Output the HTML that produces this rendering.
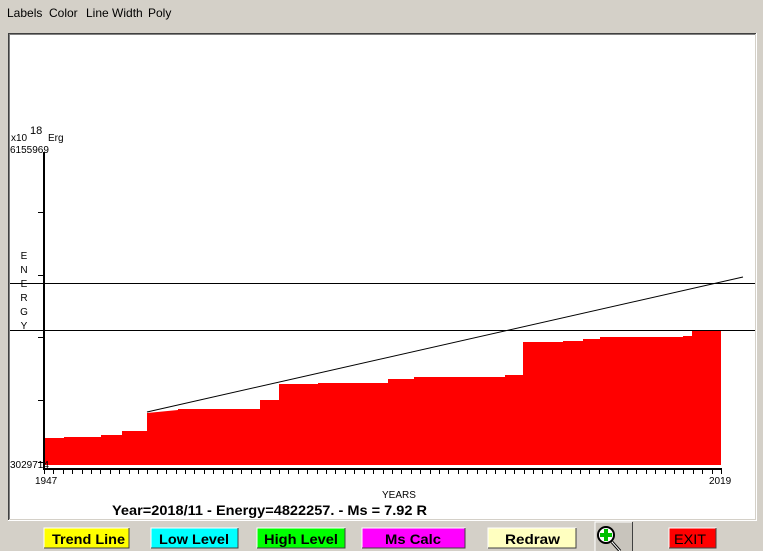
<!DOCTYPE html>
<html><head><meta charset="utf-8"><style>
html,body{margin:0;padding:0;width:763px;height:551px;overflow:hidden;background:#d4d0c8;font-family:"Liberation Sans",sans-serif;}
svg{position:absolute;left:0;top:0}
</style></head><body>
<svg width="763" height="551" viewBox="0 0 763 551" xmlns="http://www.w3.org/2000/svg" font-family="Liberation Sans, sans-serif">
<rect x="0" y="0" width="763" height="551" fill="#d4d0c8"/>
<text x="7" y="17" font-size="12" fill="#000">Labels</text>
<text x="49" y="17" font-size="12" fill="#000">Color</text>
<text x="86" y="17" font-size="12" fill="#000">Line Width</text>
<text x="148" y="17" font-size="12" fill="#000">Poly</text>
<rect x="8" y="33" width="749" height="488" fill="#fff"/>
<path d="M8.5 520V33.5H756" stroke="#404040" stroke-width="1" fill="none"/>
<path d="M9.5 520V34.5H755" stroke="#808080" stroke-width="1" fill="none"/>
<path d="M8 520.5H756.5V33" stroke="#fff" stroke-width="1" fill="none"/>
<path d="M9 519.5H755.5V34" stroke="#d4d0c8" stroke-width="1" fill="none"/>
<polygon fill="#ff0000" points="45,465 45,438 64,438 64,437 101,437 101,435 122,435 122,431 147,431 147,413 178,410 178,409 260,409 260,400 279,400 279,384 318,384 318,383 388,383 388,379 414,379 414,377 505,377 505,375 523,375 523,342 563,342 563,341 583,341 583,339 600,339 600,337 683,337 683,336 692,336 692,331 721,331 721,465"/>
<line x1="10" y1="283.5" x2="755" y2="283.5" stroke="#000"/>
<line x1="10" y1="330.5" x2="755" y2="330.5" stroke="#000"/>
<line x1="147" y1="412" x2="743" y2="277" stroke="#000"/>
<rect x="43" y="152" width="2" height="318" fill="#000"/>
<rect x="43" y="468" width="679" height="2" fill="#000"/>
<g stroke="#000">
<line x1="38" y1="212.5" x2="43" y2="212.5"/>
<line x1="38" y1="275.5" x2="43" y2="275.5"/>
<line x1="38" y1="337.5" x2="43" y2="337.5"/>
<line x1="38" y1="400.5" x2="43" y2="400.5"/>
<line x1="38" y1="462.5" x2="43" y2="462.5"/>
</g>
<g stroke="#000" id="ticks"></g>
<text x="11" y="141" font-size="10">x10</text>
<text x="30" y="134" font-size="11">18</text>
<text x="48" y="141" font-size="10">Erg</text>
<text x="10" y="153" font-size="10">6155969</text>
<text x="10" y="468" font-size="10">3029714</text>
<g font-size="10" text-anchor="middle">
<text x="24" y="259">E</text><text x="24" y="273">N</text><text x="24" y="287">E</text><text x="24" y="301">R</text><text x="24" y="315">G</text><text x="24" y="329">Y</text>
</g>
<text x="35" y="484" font-size="10">1947</text>
<text x="709" y="484" font-size="10">2019</text>
<text x="382" y="498" font-size="10">YEARS</text>
<text x="112" y="515" font-size="14" font-weight="bold" textLength="315" lengthAdjust="spacingAndGlyphs">Year=2018/11 - Energy=4822257. - Ms = 7.92 R</text>
<g font-size="14" font-weight="bold">
<rect x="44" y="528" width="85" height="20" fill="#ffff00" stroke="#fff"/>
<path d="M44 548H129V528" stroke="#404040" fill="none"/>
<text x="52" y="544" textLength="73" lengthAdjust="spacingAndGlyphs">Trend Line</text>
<rect x="151" y="528" width="87" height="20" fill="#00ffff" stroke="#fff"/>
<path d="M151 548H238V528" stroke="#404040" fill="none"/>
<text x="159" y="544" textLength="70" lengthAdjust="spacingAndGlyphs">Low Level</text>
<rect x="257" y="528" width="88" height="20" fill="#00ff00" stroke="#fff"/>
<path d="M257 548H345V528" stroke="#404040" fill="none"/>
<text x="264" y="544" textLength="74" lengthAdjust="spacingAndGlyphs">High Level</text>
<rect x="362" y="528" width="103" height="20" fill="#ff00ff" stroke="#fff"/>
<path d="M362 548H465V528" stroke="#404040" fill="none"/>
<text x="385" y="544" textLength="56" lengthAdjust="spacingAndGlyphs">Ms Calc</text>
<rect x="488" y="528" width="88" height="20" fill="#ffffc0" stroke="#fff"/>
<path d="M488 548H576V528" stroke="#404040" fill="none"/>
<text x="505" y="544" textLength="55" lengthAdjust="spacingAndGlyphs">Redraw</text>
<rect x="669" y="528" width="47" height="20" fill="#ff0000" stroke="#fff"/>
<path d="M669 548H716V528" stroke="#404040" fill="none"/>
<text x="674" y="544" textLength="32" lengthAdjust="spacingAndGlyphs" font-weight="normal">EXIT</text>
</g>
<rect x="595" y="522" width="37" height="29" fill="#c8c4bc"/>
<path d="M595 551V522H632" stroke="#fff" fill="none"/>
<line x1="632.5" y1="522" x2="632.5" y2="551" stroke="#404040"/>
<circle cx="606" cy="535" r="8" fill="#fff" stroke="#000" stroke-width="2"/>
<rect x="604" y="529" width="4" height="12" fill="#00c000"/>
<rect x="600" y="533" width="12" height="4" fill="#00c000"/>
<line x1="612" y1="542" x2="620" y2="551" stroke="#000" stroke-width="3"/>
<line x1="612" y1="542" x2="620" y2="551" stroke="#fff" stroke-width="1"/>
</svg>
<script>
var g=document.getElementById('ticks');var s='';
for(var i=0;i<=72;i++){var x=Math.round(44+i*(677/72))+0.5;s+='<line x1="'+x+'" y1="470" x2="'+x+'" y2="474" stroke="#000"/>';}
g.innerHTML=s;
</script>
</body></html>
